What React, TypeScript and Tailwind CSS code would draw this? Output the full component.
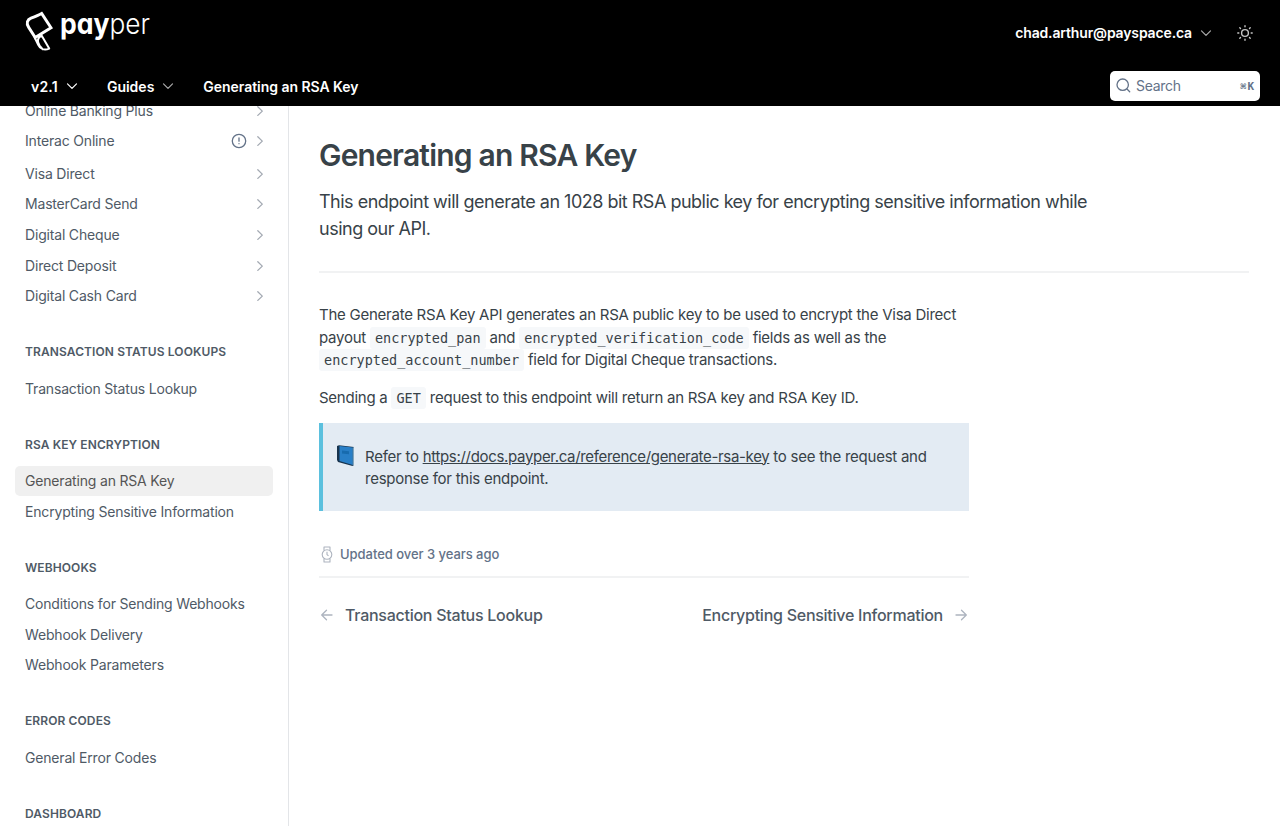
import React from "react";

const Chevron = ({ className = "" }: { className?: string }) => (
  <svg className={className} width="14" height="14" viewBox="0 0 14 14" fill="none" stroke="currentColor" strokeWidth="1.2" strokeLinecap="round" strokeLinejoin="round">
    <path d="M2.5 4.8 7 9.3l4.5-4.5" />
  </svg>
);

const ChevronRight = () => (
  <svg width="14" height="14" viewBox="0 0 14 14" fill="none" stroke="#a3a9b2" strokeWidth="1.3" strokeLinecap="round" strokeLinejoin="round">
    <path d="M4.8 2.8 9.3 7.1 4.8 11.4" />
  </svg>
);

const Logo = () => (
  <div className="flex h-[50px] items-start">
    <svg width="35" height="50" viewBox="0 0 35 50" fill="none" aria-hidden="true">
      <path d="M16.6 5.4 26 19.7 10.2 29.6 3.7 19.4C.9 15.2 2.3 11.6 6 10.1 9.6 8.7 13.4 7.2 16.6 5.4Z" stroke="#fff" strokeWidth="2.9" />
      <path d="M9.4 29 13.2 36.8C15.2 41.2 19.4 42.8 24.2 40.6L16.6 27.6C12.4 29.6 11.8 33.6 14.6 37.6L18 41.6" stroke="#fff" strokeWidth="2" strokeLinejoin="round" />
    </svg>
    <svg className="font-['Inter',sans-serif] [font-feature-settings:'cv11']" width="96" height="50" viewBox="0 0 96 50" fill="#fff">
      <text x="0" y="25.5" fontSize="28.5" fontWeight="700" textLength="49.5" lengthAdjust="spacingAndGlyphs">pay</text>
      <text x="49.5" y="25.5" fontSize="28" fontWeight="300" textLength="40.5" lengthAdjust="spacingAndGlyphs">per</text>
    </svg>
  </div>
);

type RowProps = { label: string; h: string; arrow?: boolean; alert?: boolean; active?: boolean };

const Row = ({ label, h, arrow, alert, active }: RowProps) => (
  <a className={`flex shrink-0 items-center rounded-[5px] px-2.5 ${h} ${active ? "bg-[#f0f0f0] text-[#555]" : "text-[#4f5a66]"}`}>
    <span className="flex-1">{label}</span>
    {alert && (
      <svg className="mr-1.5" width="16" height="16" viewBox="0 0 16 16" fill="none" stroke="#637288" strokeWidth="1.3" strokeLinecap="round">
        <circle cx="8" cy="8" r="6.7" />
        <path d="M8 5v3.2M8 10.6v.1" />
      </svg>
    )}
    {arrow && <span className="-mr-[4px]"><ChevronRight /></span>}
  </a>
);

const Heading = ({ children, className }: { children: string; className: string }) => (
  <h2 className={`shrink-0 px-2.5 text-[12px] leading-[18px] font-semibold tracking-[0.1px] text-[#4f5a66] ${className}`}>{children}</h2>
);

const Code = ({ children }: { children: string }) => (
  <code className="rounded-[3px] bg-[#f6f8fa] px-[5px] py-[3px] font-['DejaVu_Sans_Mono','Liberation_Mono',monospace] text-[13.5px] leading-none tracking-normal">{children}</code>
);

export default function App() {
  return (
    <div className="flex h-[826px] w-[1280px] flex-col overflow-hidden bg-white font-['Inter',sans-serif] text-[#384248]">
      <header className="flex h-[106px] shrink-0 flex-col bg-black text-white">
        <div className="flex h-[66px] items-center justify-between pr-[27px] pl-[25px]">
          <Logo />
          <div className="flex items-center text-sm font-semibold">
            <span className="tracking-[-0.15px]">chad.arthur@payspace.ca</span>
            <Chevron className="ml-[7px] text-[#aaa]" />
            <svg className="ml-6" width="16" height="16" viewBox="0 0 16 16" fill="none" stroke="#c4c4c4" strokeWidth="1.4" strokeLinecap="round">
              <circle cx="8" cy="8" r="3.4" />
              <path d="M8 .8v1M8 14.2v1M.8 8h1M14.2 8h1M2.8 2.8l.7.7M12.5 12.5l.7.7M2.8 13.2l.7-.7M12.5 3.5l.7-.7" />
            </svg>
          </div>
        </div>
        <div className="flex h-10 items-center pr-5 pl-[31px] text-sm font-semibold">
          <span className="pt-0.5 tracking-[0.2px]">v2.1</span>
          <Chevron className="mr-7 ml-[7px]" />
          <span className="pt-0.5">Guides</span>
          <Chevron className="mr-7 ml-[7px] text-[#aaa]" />
          <span className="flex-1 pt-0.5 tracking-[-0.04px]">Generating an RSA Key</span>
          <div className="flex h-[30px] w-[150px] items-center rounded-[5px] bg-white px-1.5 font-normal text-[#637288]">
            <svg className="-mt-0.5" width="15" height="15" viewBox="0 0 15 15" fill="none" stroke="currentColor" strokeWidth="1.3" strokeLinecap="round">
              <circle cx="6.7" cy="6.7" r="5.7" />
              <path d="m11 11 2.7 2.7" />
            </svg>
            <span className="ml-[5px] flex-1 tracking-[-0.3px]">Search</span>
            <span className="flex items-center gap-px pt-0.5 font-['DejaVu_Sans_Mono',monospace] text-[11px] font-bold"><span className="text-[10px]">⌘</span>K</span>
          </div>
        </div>
      </header>
      <div className="flex min-h-0 flex-1">
        <nav className="flex w-[289px] shrink-0 flex-col overflow-hidden border-r border-[#e3e5e8] px-[15px] text-sm tracking-[-0.18px]">
          <div className="-mt-[10px] flex shrink-0 flex-col">
            <Row label="Online Banking Plus" h="h-[30px]" arrow />
            <Row label="Interac Online" h="h-[30px]" arrow alert />
            <Row label="Visa Direct" h="h-[35px]" arrow />
            <Row label="MasterCard Send" h="h-[26px]" arrow />
            <Row label="Digital Cheque" h="h-[35px]" arrow />
            <Row label="Direct Deposit" h="h-[28px]" arrow />
            <Row label="Digital Cash Card" h="h-[32px]" arrow />
          </div>
          <Heading className="mt-[31px]">TRANSACTION STATUS LOOKUPS</Heading>
          <div className="mt-[13px]"><Row label="Transaction Status Lookup" h="h-[30px]" /></div>
          <Heading className="mt-[32px]">RSA KEY ENCRYPTION</Heading>
          <div className="mt-[12px]">
            <Row label="Generating an RSA Key" h="h-[30px]" active />
            <Row label="Encrypting Sensitive Information" h="h-[32px]" />
          </div>
          <Heading className="mt-[31px]">WEBHOOKS</Heading>
          <div className="mt-[12px]">
            <Row label="Conditions for Sending Webhooks" h="h-[30px]" />
            <Row label="Webhook Delivery" h="h-[31px]" />
            <Row label="Webhook Parameters" h="h-[30px]" />
          </div>
          <Heading className="mt-[32px]">ERROR CODES</Heading>
          <div className="mt-[13px]"><Row label="General Error Codes" h="h-[30px]" /></div>
          <Heading className="mt-[32px]">DASHBOARD</Heading>
        </nav>
        <main className="flex-1 pt-[29px] pr-[31px] pl-[30px]">
          <header className="border-b-2 border-[#f1f2f3] pb-[29px]">
            <h1 className="text-[30px] leading-[40px] font-semibold tracking-[-0.8px]">Generating an RSA Key</h1>
            <p className="mt-[13px] w-[800px] text-[18px] leading-[27px] tracking-[-0.5px]">This endpoint will generate an 1028 bit RSA public key for encrypting sensitive information while using our API.</p>
          </header>
          <div className="w-[650px] tracking-[-0.25px]">
            <p className="mt-[31px] text-[15px] leading-[22.5px]">
              The Generate RSA Key API generates an RSA public key to be used to encrypt the Visa Direct<br />
              payout <Code>encrypted_pan</Code> and <Code>encrypted_verification_code</Code> fields as well as the<br />
              <Code>encrypted_account_number</Code> field for Digital Cheque transactions.
            </p>
            <p className="mt-[15px] text-[15px] leading-[22.5px]">Sending a <Code>GET</Code> request to this endpoint will return an RSA key and RSA Key ID.</p>
            <div className="mt-[14px] flex h-[88px] border-l-[4px] border-[#5bc0de] bg-[#e3ebf3] pt-[22px] text-[15px] leading-[22.5px]">
              <svg className="ml-[13px] shrink-0" width="20" height="22" viewBox="0 0 20 22">
                <path d="m1 1 2-.7L18 2v18l-1.5.9L2 17 1 15Z" fill="#17334d" />
                <path d="m3.5 1 13.3 1.4v17.5L3.5 16Z" fill="#287fc7" />
                <path d="M16.8 2.4 18 2v18l-1.2.4Z" fill="#83a6bd" />
                <path d="m6 5.5 7 .8v3L6 8.5Z" fill="#176bae" />
              </svg>
              <p className="mt-[0.6px] ml-[9px]">Refer to <a className="tracking-[-0.32px] underline">https://docs.payper.ca/reference/generate-rsa-key</a> to see the request and<br />response for this endpoint.</p>
            </div>
            <div className="mt-[31px] flex h-[36px] items-start border-b-2 border-[#f1f2f3] text-[13px] font-medium tracking-[-0.04px] text-[#637288]">
              <svg className="mt-[4px] mr-[5px]" width="16" height="17" viewBox="0 0 16 17" fill="none" stroke="#adb4bf" strokeWidth="1.1" strokeLinejoin="round">
                <circle cx="8" cy="8.5" r="4.8" />
                <path d="M5 4.5V1h6v3.5M5 12.5V16h6v-3.5M8 5.8v2.8l1.5 1.2" />
              </svg>
              <span className="leading-[25px]">Updated over 3 years ago</span>
            </div>
            <div className="mt-[25px] flex items-center justify-between text-[16px] leading-6 font-medium tracking-[-0.26px] text-[#4f5a66]">
              <span className="flex items-center gap-[10px]">
                <svg width="16" height="16" viewBox="0 0 16 16" fill="none" stroke="#adb4bf" strokeWidth="1.3" strokeLinecap="round" strokeLinejoin="round"><path d="M13 8H3M7.5 3.2 2.7 8l4.8 4.8" /></svg>
                Transaction Status Lookup
              </span>
              <span className="flex items-center gap-[10px]">
                Encrypting Sensitive Information
                <svg width="16" height="16" viewBox="0 0 16 16" fill="none" stroke="#adb4bf" strokeWidth="1.3" strokeLinecap="round" strokeLinejoin="round"><path d="M3 8h10M8.5 3.2 13.3 8l-4.8 4.8" /></svg>
              </span>
            </div>
          </div>
        </main>
      </div>
    </div>
  );
}
